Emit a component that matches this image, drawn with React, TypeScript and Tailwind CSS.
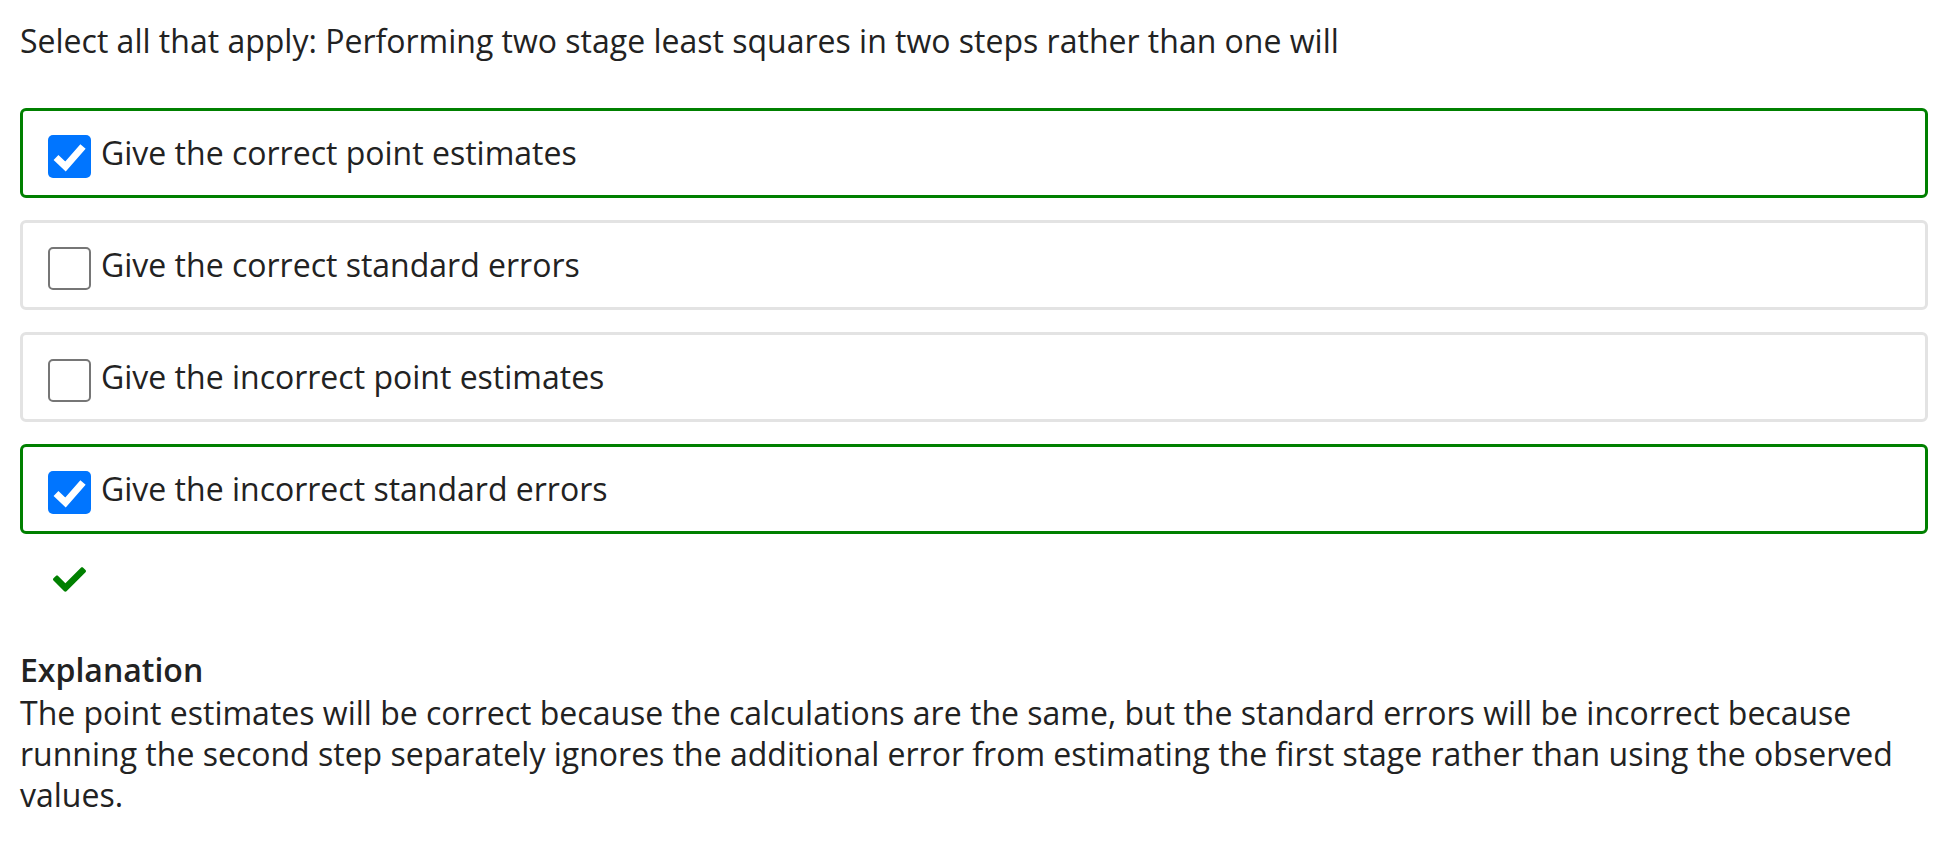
import React from "react";
import { FaCheck } from "react-icons/fa";

type Opt = { label: string; checked: boolean };

const options: Opt[] = [
  { label: "Give the correct point estimates", checked: true },
  { label: "Give the correct standard errors", checked: false },
  { label: "Give the incorrect point estimates", checked: false },
  { label: "Give the incorrect standard errors", checked: true },
];

function Box({ checked }: { checked: boolean }) {
  if (checked) {
    return (
      <span className="mt-[7px] flex h-[43px] w-[43px] shrink-0 items-center justify-center rounded-[5px] bg-[#0075ff]">
        <svg width="43" height="43" viewBox="0 0 43 43">
          <polyline
            points="8,22.5 17.5,31.5 35,11.5"
            fill="none"
            stroke="#ffffff"
            strokeWidth="7"
            strokeLinejoin="miter"
          />
        </svg>
      </span>
    );
  }
  return (
    <span className="mt-[7px] block h-[43px] w-[43px] shrink-0 rounded-[5px] border-2 border-[#767676] bg-white" />
  );
}

export default function App() {
  return (
    <div className="min-h-[846px] w-[1948px] bg-white px-[20px] pt-[17px] font-['Open_Sans',sans-serif] text-[32px] text-[#222222]">
      <p className="leading-[48px]">
        Select all that apply: Performing two stage least squares in two steps rather than one will
      </p>
      <div className="mt-[43px] flex flex-col gap-[22px]">
        {options.map((o) => (
          <div
            key={o.label}
            className={
              o.checked
                ? "flex h-[90px] items-center gap-[10px] rounded-[6px] border-[3px] border-[#008000] pl-[25px]"
                : "flex h-[90px] items-center gap-[10px] rounded-[6px] border-[3px] border-[#e3e3e3] pl-[25px]"
            }
          >
            <Box checked={o.checked} />
            <span className="leading-[48px]">{o.label}</span>
          </div>
        ))}
      </div>
      <div className="ml-[33px] mt-[29px] text-[#008000]">
        <FaCheck size={33} />
      </div>
      <div className="mt-[53px] pb-[20px]">
        <p className="font-semibold leading-[42px]">Explanation</p>
        <p className="leading-[41px] mt-[1px]">
          The point estimates will be correct because the calculations are the same, but the standard errors will be
          incorrect because running the second step separately ignores the additional error from estimating the first
          stage rather than using the observed values.
        </p>
      </div>
    </div>
  );
}
